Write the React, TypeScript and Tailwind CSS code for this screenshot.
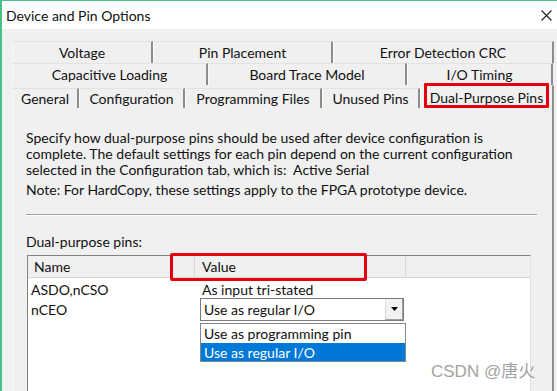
const tabRows = [
  {
    cls: "h-[22px]",
    tabs: [
      { label: "Voltage", w: "w-[141px]" },
      { label: "Pin Placement", w: "w-[180px]" },
      { label: "Error Detection CRC", w: "flex-1" },
    ],
  },
  {
    cls: "h-[22px] pr-[1px]",
    tabs: [
      { label: "Capacitive Loading", w: "w-[196px]" },
      { label: "Board Trace Model", w: "w-[199px]" },
      { label: "I/O Timing", w: "flex-1" },
    ],
  },
];

const bottomTabs = [
  { label: "General", w: "w-[67px]" },
  { label: "Configuration", w: "w-[106px]" },
  { label: "Programming Files", w: "w-[137px]" },
  { label: "Unused Pins", w: "w-[98px]" },
];

function Tab({ label, w }: { label: string; w: string }) {
  return (
    <div
      className={`${w} h-full flex items-center justify-center border-t border-l border-t-[#e2e2e2] border-l-[#fbfbfb] border-r-2 border-r-[#8c8c8c] bg-[#f0f0f0]`}
    >
      {label}
    </div>
  );
}

export default function App() {
  return (
    <div className="relative w-[557px] h-[391px] overflow-hidden bg-[#f0f0f0] border-l-2 border-t border-[#48c08a] text-[#111] text-[14px] font-['Lato','Liberation_Sans',sans-serif]">
      {/* title bar */}
      <div className="h-[28px] bg-white flex items-center justify-between pl-[4px] pr-[5px]">
        <span className="text-[14px]">Device and Pin Options</span>
        <svg width="11" height="11" viewBox="0 0 11 11">
          <path d="M0.5 0.5 L10.5 10.5 M10.5 0.5 L0.5 10.5" stroke="#222" strokeWidth="1.1" />
        </svg>
      </div>

      <div className="pl-[10px] pr-[3px] pt-[12px]">
        {/* tab rows */}
        {tabRows.map((row, i) => (
          <div key={i} className={`flex ${row.cls}`}>
            {row.tabs.map((t) => (
              <Tab key={t.label} label={t.label} w={t.w} />
            ))}
          </div>
        ))}
        <div className="flex h-[23px]">
          {bottomTabs.map((t) => (
            <div key={t.label} className={`${t.w} pt-[3px]`}>
              <Tab label={t.label} w="w-full" />
            </div>
          ))}
          <div className="relative flex-1 flex items-center justify-center border-t border-l border-t-[#e2e2e2] border-l-[#fbfbfb] border-r-2 border-r-[#8c8c8c] bg-[#f0f0f0]">
            Dual-Purpose Pins
            <div className="absolute left-[3px] right-[3px] top-[-3px] bottom-[0px] border-[3px] border-[#e4000f] rounded-[1px]" />
          </div>
        </div>

        {/* tab panel */}
        <div className="h-[300px] border-l border-l-[#fbfbfb] border-r-2 border-r-[#8c8c8c] pl-[13px] pr-[15px] pt-[22px]">
          <p className="leading-[16px]">
            Specify how dual-purpose pins should be used after device configuration is
            <br />
            complete. The default settings for each pin depend on the current configuration
            <br />
            selected in the Configuration tab, which is:&nbsp;&nbsp;Active Serial
          </p>
          <p className="leading-[16px] mt-[4px]">
            Note: For HardCopy, these settings apply to the FPGA prototype device.
          </p>
          <div className="mt-[16px] border-t border-t-[#a0a0a0] border-b border-b-white" />

          <div className="mt-[18px] leading-[16px]">Dual-purpose pins:</div>

          {/* table */}
          <div className="mt-[5px] ml-[1px] w-[504px] h-[160px] border-t border-l border-t-[#828282] border-l-[#828282] border-r border-r-[#e0e0e0] bg-white">
            <div className="relative flex h-[22px] bg-[#f0f0f0] border-b border-b-[#d6d6d6]">
              <div className="w-[167px] flex items-center pl-[6px] border-r border-r-[#d6d6d6]">Name</div>
              <div className="w-[211px] flex items-center pl-[7px] border-r border-r-[#d6d6d6]">Value</div>
              <div className="flex-1" />
              <div className="absolute left-[142px] top-[-3px] w-[197px] h-[28px] border-[3px] border-[#e4000f] rounded-[2px]" />
            </div>

            <div className="grid grid-cols-[172px_1fr] pt-[4px]">
              <div className="pl-[3px]">
                <div className="h-[16px] leading-[16px]">ASDO,nCSO</div>
                <div className="h-[23px] flex items-center">nCEO</div>
              </div>
              <div>
                <div className="h-[16px] leading-[16px] pl-[2px]">As input tri-stated</div>
                <div className="w-[204px] h-[23px] flex border border-[#7a7a7a] bg-white">
                  <div className="flex-1 flex items-center pl-[3px]">Use as regular I/O</div>
                  <div className="w-[18px] flex items-center justify-center bg-[#f2f2f2] border-l border-l-[#dcdcdc] border-r border-b border-r-[#a0a0a0] border-b-[#a0a0a0]">
                    <svg width="7" height="4" viewBox="0 0 7 4">
                      <path d="M0 0 H7 L3.5 4 Z" fill="#000" />
                    </svg>
                  </div>
                </div>
                <div className="mt-[2px] w-[206px] border border-[#828790] bg-white">
                  <div className="h-[19px] flex items-center pl-[3px]">Use as programming pin</div>
                  <div className="h-[18px] flex items-center pl-[3px] bg-[#0078d7] text-white">Use as regular I/O</div>
                </div>
              </div>
            </div>
          </div>
        </div>
      </div>

      {/* watermark */}
      <div className="absolute left-[429px] top-[361px] text-[17px] leading-[20px] text-[#a3a3a3] font-['Liberation_Sans','Noto_Sans_CJK_SC',sans-serif]">
        CSDN @唐火
      </div>
    </div>
  );
}
